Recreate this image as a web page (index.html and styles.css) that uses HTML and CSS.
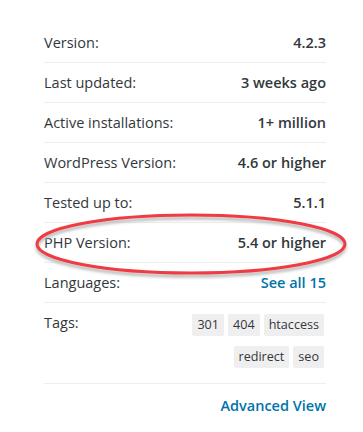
FILE: index.html
```html
<!DOCTYPE html>
<html>
<head>
<meta charset="utf-8">
<link rel="stylesheet" href="styles.css">
</head>
<body>
<div class="meta">
  <ul class="rows">
    <li class="row"><span class="label">Version:</span><strong class="value">4.2.3</strong></li>
    <li class="row"><span class="label">Last updated:</span><strong class="value">3 weeks ago</strong></li>
    <li class="row"><span class="label">Active installations:</span><strong class="value">1+ million</strong></li>
    <li class="row"><span class="label">WordPress Version:</span><strong class="value">4.6 or higher</strong></li>
    <li class="row"><span class="label">Tested up to:</span><strong class="value">5.1.1</strong></li>
    <li class="row"><span class="label">PHP Version:</span><strong class="value">5.4 or higher</strong></li>
    <li class="row"><span class="label">Languages:</span><a class="value link" href="#">See all 15</a></li>
    <li class="row tags-row"><span class="label">Tags:</span>
      <div class="tags">
        <a class="tag" href="#">301</a><a class="tag" href="#">404</a><a class="tag" href="#">htaccess</a><a class="tag" href="#">redirect</a><a class="tag" href="#">seo</a>
      </div>
    </li>
  </ul>
  <p class="advanced"><a class="link" href="#">Advanced View</a></p>
  <svg class="annotation" width="340" height="80" viewBox="0 0 340 80">
    <defs>
      <filter id="sh" x="-10%" y="-30%" width="120%" height="160%">
        <feGaussianBlur stdDeviation="1.5"/>
      </filter>
    </defs>
    <ellipse cx="170" cy="38" rx="154" ry="29" fill="none" stroke="#b5b5b5" stroke-width="3" filter="url(#sh)"/>
    <ellipse cx="170" cy="35" rx="154" ry="29" fill="none" stroke="#f03b43" stroke-width="3"/>
  </svg>
</div>
</body>
</html>
```
FILE: styles.css
```css
html, body {
  margin: 0;
  padding: 0;
  background: #fff;
}
body {
  font-family: "Open Sans", "Liberation Sans", sans-serif;
  font-size: 14.5px;
  color: #32373c;
}
.meta {
  position: relative;
  width: 282px;
  margin-left: 44px;
  padding-top: 23px;
}
.rows {
  list-style: none;
  margin: 0;
  padding: 0;
}
.row {
  display: flex;
  justify-content: space-between;
  align-items: flex-start;
  padding: 10px 0 10px;
  line-height: 19px;
  border-bottom: 1px solid #eeeeee;
}
.label {
  font-weight: 400;
}
.value {
  font-weight: 600;
}
.link {
  color: #0073aa;
  text-decoration: none;
  font-weight: 600;
}
.tags-row {
  padding-bottom: 15px;
}
.tags {
  display: flex;
  flex-wrap: wrap;
  justify-content: flex-end;
  gap: 10px 4px;
  width: 140px;
  margin-top: 1px;
  margin-right: 2px;
}
.tag {
  display: block;
  height: 22px;
  line-height: 22px;
  padding: 0 5px;
  background: #efefef;
  border-radius: 2px;
  color: #32373c;
  font-size: 12.6px;
  text-decoration: none;
}
.advanced {
  margin: 0;
  padding-top: 12px;
  line-height: 19px;
  text-align: right;
}
.annotation {
  position: absolute;
  left: -23.5px;
  top: 209px;
  overflow: visible;
}
```
